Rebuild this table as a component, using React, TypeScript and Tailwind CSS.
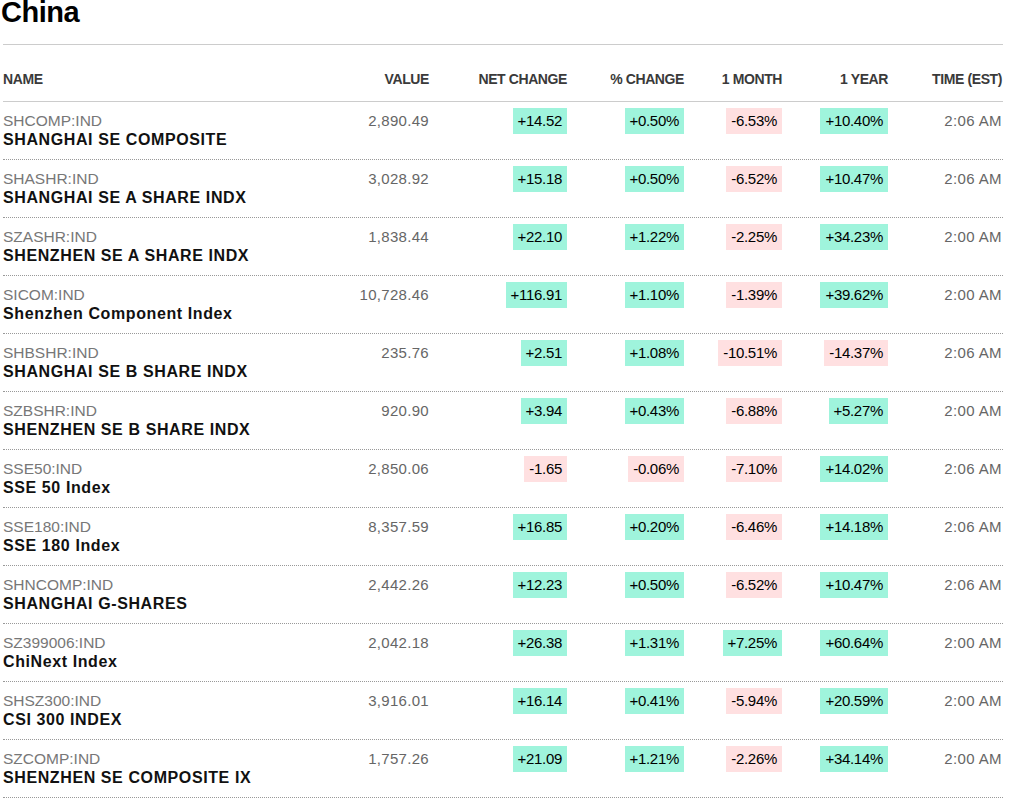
import React from 'react'

type Row = [string, string, string, string, string, string, string, string]

const ROWS: Row[] = [
  ['SHCOMP:IND', 'SHANGHAI SE COMPOSITE', '2,890.49', '+14.52', '+0.50%', '-6.53%', '+10.40%', '2:06 AM'],
  ['SHASHR:IND', 'SHANGHAI SE A SHARE INDX', '3,028.92', '+15.18', '+0.50%', '-6.52%', '+10.47%', '2:06 AM'],
  ['SZASHR:IND', 'SHENZHEN SE A SHARE INDX', '1,838.44', '+22.10', '+1.22%', '-2.25%', '+34.23%', '2:00 AM'],
  ['SICOM:IND', 'Shenzhen Component Index', '10,728.46', '+116.91', '+1.10%', '-1.39%', '+39.62%', '2:00 AM'],
  ['SHBSHR:IND', 'SHANGHAI SE B SHARE INDX', '235.76', '+2.51', '+1.08%', '-10.51%', '-14.37%', '2:06 AM'],
  ['SZBSHR:IND', 'SHENZHEN SE B SHARE INDX', '920.90', '+3.94', '+0.43%', '-6.88%', '+5.27%', '2:00 AM'],
  ['SSE50:IND', 'SSE 50 Index', '2,850.06', '-1.65', '-0.06%', '-7.10%', '+14.02%', '2:06 AM'],
  ['SSE180:IND', 'SSE 180 Index', '8,357.59', '+16.85', '+0.20%', '-6.46%', '+14.18%', '2:06 AM'],
  ['SHNCOMP:IND', 'SHANGHAI G-SHARES', '2,442.26', '+12.23', '+0.50%', '-6.52%', '+10.47%', '2:06 AM'],
  ['SZ399006:IND', 'ChiNext Index', '2,042.18', '+26.38', '+1.31%', '+7.25%', '+60.64%', '2:00 AM'],
  ['SHSZ300:IND', 'CSI 300 INDEX', '3,916.01', '+16.14', '+0.41%', '-5.94%', '+20.59%', '2:00 AM'],
  ['SZCOMP:IND', 'SHENZHEN SE COMPOSITE IX', '1,757.26', '+21.09', '+1.21%', '-2.26%', '+34.14%', '2:00 AM'],
]

const GRID = 'grid grid-cols-[326px_100px_138px_117px_98px_106px_114px]'

export default function App() {
  return (
    <div className="min-h-screen bg-white font-['Liberation_Sans',Arial,sans-serif]">
      <div className="ml-[3px] w-[1000px]">
        <div className="flex h-[45px] flex-col border-b border-[#cccccc]">
          <h1 className="-ml-[2px] text-[29px] font-bold leading-[24px] tracking-[-0.5px] text-black">China</h1>
        </div>

        <div className={`${GRID} border-b border-[#cccccc] pt-[26px] pb-[14px] text-[14px] font-bold leading-[16px] tracking-[-0.4px] text-[#3a3a3a]`}>
          <span>NAME</span>
          <span className="text-right">VALUE</span>
          <span className="text-right">NET CHANGE</span>
          <span className="text-right">% CHANGE</span>
          <span className="text-right">1 MONTH</span>
          <span className="text-right">1 YEAR</span>
          <span className="text-right">TIME (EST)</span>
        </div>

        {ROWS.map((r) => (
          <QuoteRow key={r[0]} row={r} />
        ))}
      </div>
    </div>
  )
}

function QuoteRow({ row }: { row: Row }) {
  const [ticker, name, value, net, pct, month, year, time] = row
  return (
    <div className={`${GRID} h-[58px] border-b border-dotted border-[#999999]`}>
      <div className="pt-[9px]">
        <div className="text-[15.5px] leading-[19px] text-[#777777]">{ticker}</div>
        <div className="text-[16px] font-bold leading-[19px] tracking-[0.6px] text-[#111111]">{name}</div>
      </div>
      <div className="pt-[9px] text-right text-[15px] leading-[19px] tracking-[0.3px] text-[#666666]">{value}</div>
      <Chg v={net} />
      <Chg v={pct} />
      <Chg v={month} />
      <Chg v={year} />
      <div className="pt-[9px] text-right text-[15px] leading-[19px] tracking-[0.4px] text-[#666666]">{time}</div>
    </div>
  )
}

function Chg({ v }: { v: string }) {
  const up = v.startsWith('+')
  return (
    <div className="flex justify-end pt-[6px]">
      <span
        className={`h-[26px] px-[5px] text-[15px] leading-[26px] tracking-[-0.3px] text-black ${up ? 'bg-[#9ff4dc]' : 'bg-[#ffe0e1]'}`}
      >
        {v}
      </span>
    </div>
  )
}
